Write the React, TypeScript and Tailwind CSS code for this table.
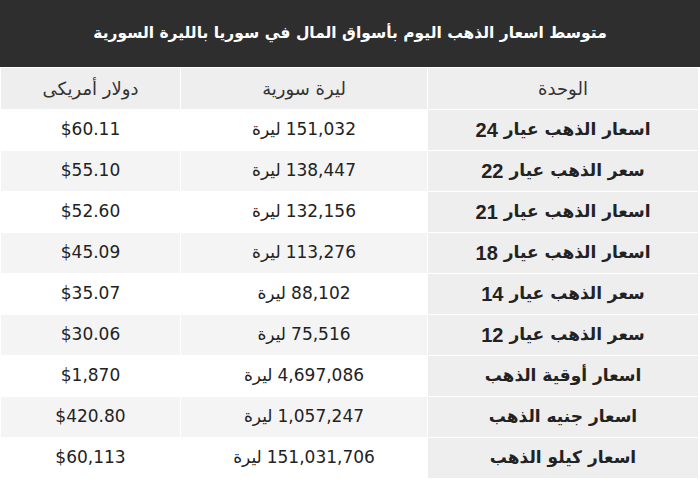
import React from "react";

const rows = [
  { unit: "اسعار الذهب عيار", karat: "24", lira: "151,032", usd: "$60.11" },
  { unit: "سعر الذهب عيار", karat: "22", lira: "138,447", usd: "$55.10" },
  { unit: "اسعار الذهب عيار", karat: "21", lira: "132,156", usd: "$52.60" },
  { unit: "اسعار الذهب عيار", karat: "18", lira: "113,276", usd: "$45.09" },
  { unit: "سعر الذهب عيار", karat: "14", lira: "88,102", usd: "$35.07" },
  { unit: "سعر الذهب عيار", karat: "12", lira: "75,516", usd: "$30.06" },
  { unit: "اسعار أوقية الذهب", karat: "", lira: "4,697,086", usd: "$1,870" },
  { unit: "اسعار جنيه الذهب", karat: "", lira: "1,057,247", usd: "$420.80" },
  { unit: "اسعار كيلو الذهب", karat: "", lira: "151,031,706", usd: "$60,113" },
];

export default function App() {
  return (
    <div dir="rtl" className="w-[700px] h-[485px] bg-white font-['DejaVu_Sans',sans-serif] text-[#222]">
      {/* Title bar */}
      <div className="h-[67px] bg-[#2e2e2e] flex items-center justify-center">
        <h1 className="text-white text-[15.5px] font-bold">
          متوسط اسعار الذهب اليوم بأسواق المال في سوريا بالليرة السورية
        </h1>
      </div>

      <div className="grid grid-cols-[270px_246px_179px] gap-[1px] pt-[1px] pr-[2px] pl-[1px]">
        <div className="h-[41px] bg-[#eeeeee] flex items-center justify-center text-[18px] text-[#333]">الوحدة</div>
        <div className="h-[41px] bg-[#eeeeee] flex items-center justify-center text-[18px] text-[#333]">ليرة سورية</div>
        <div className="h-[41px] bg-[#eeeeee] flex items-center justify-center text-[18px] text-[#333]">دولار أمريكى</div>

        {rows.map((r, i) => {
          const bg = i % 2 === 0 ? "bg-white" : "bg-[#f4f4f4]";
          return (
            <React.Fragment key={i}>
              <div className="h-[40px] bg-[#eeeeee] flex items-center justify-center text-[17px] font-bold text-[#222]">
                {r.unit}
                {r.karat && <span className="mr-[6px] font-['Liberation_Sans',sans-serif] text-[20px]">{r.karat}</span>}
              </div>
              <div className={`h-[40px] ${bg} flex items-center justify-center text-[17px]`}>
                <span>{r.lira}</span>
                <span className="mr-[5px]">ليرة</span>
              </div>
              <div className={`h-[40px] ${bg} flex items-center justify-center text-[17px]`}>
                <span dir="ltr">{r.usd}</span>
              </div>
            </React.Fragment>
          );
        })}
      </div>
    </div>
  );
}
